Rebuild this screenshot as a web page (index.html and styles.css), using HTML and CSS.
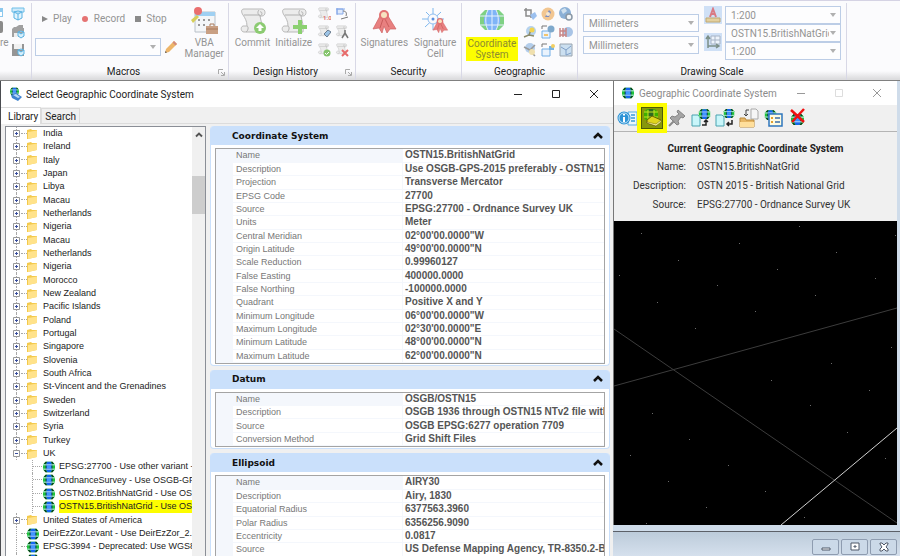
FILE: index.html
```html
<!DOCTYPE html>
<html lang="en">
<head>
    <meta charset="UTF-8">
    <meta name="viewport" content="width=device-width, initial-scale=1.0">
    <title>Select Geographic Coordinate System</title>
    <link rel="stylesheet" href="styles.css">
</head>
<body>
    <svg class="defs" aria-hidden="true">
        <symbol id="globe" viewBox="0 0 16 14">
            <path d="M4 1h8l3 3v6l-3 3H4l-3-3V4z" fill="#1fc23c"/>
            <path d="M4 1h2L4 3.500H2zM12 1h-2l2 2.500h2zM4 13h2l-2-2.500H2zM12 13h-2l2-2.500h2z" fill="#0b3d1c"/>
            <path d="M6 1h4l1.500 3v6L10 13H6l-1.500-3V4z" fill="#1565f0"/>
            <path d="M5.500 5.500h5v3h-5z" fill="#3f97ff"/>
            <path d="M4.500 3.500v7M11.500 3.500v7" stroke="#0c4a2a"/>
            <path d="M1 4.500h14M1 9.500h14" stroke="#d8f3ff"/>
        </symbol>
        <symbol id="folder" viewBox="0 0 12 12">
            <path d="M1 2l4-1 1 1h5l-.5 7L2 11H1z" fill="#f3c94b"/>
            <path d="M2 4l9-1.500V9L2 11z" fill="#ffe28a"/>
        </symbol>
        <symbol id="scroll" viewBox="0 0 28 28">
            <path d="M5 2h18c4 0 4 7 0 7h-2c1 6 3 9 2 16H5c-3 0-4-5-1-6h4c0-5-2-8-4-11S2 2 5 2z" fill="#ececec" stroke="#b9b9b9"/>
            <path d="M8 19c2 1 1 5-1 6M20 3c-2 2-1 5 1 6 3-1 2-5 0-4M5 8h16" fill="none" stroke="#b0b0b0"/>
        </symbol>
        <symbol id="ribbon-seal" viewBox="0 0 28 28">
            <path d="M10 9L3 22l6-1 3 5 2-7 3 7 3-4 6 0-8-13z" fill="#e88080" stroke="#cf6262" stroke-width=".7"/>
            <path d="M13 12l-3 9M15 12l4 8" stroke="#c95b5b"/>
            <circle cx="14" cy="8" r="5" fill="#e27373"/>
            <circle cx="14" cy="8" r="3" fill="#f7e3c0"/>
        </symbol>
        <symbol id="up" viewBox="0 0 10 8"><path d="M1 6l4-4 4 4" fill="none" stroke="currentColor" stroke-width="2.500"/></symbol>
    </svg>

    <header class="ribbon">
        <section class="group group-edge">
            <div class="group-body">
                <button class="cut" type="button">
                    <svg width="6" height="28" viewBox="0 0 6 28"><path d="M0 1h3v9H0z" fill="#8cc8ee"/><path d="M0 5h2v4H0z" fill="#fff"/><rect x="-4" y="14" width="7" height="12" rx="2" fill="#8b8b8b"/></svg>
                    re
                </button>
                <div class="small-icons one">
                    <svg viewBox="0 0 14 14"><path d="M1 1h12v4H1z" fill="#cfeafa" stroke="#6fbfe8"/><path d="M3 5l4-1 4 1v6l-4 2-4-2zM3 5l4 2 4-2M7 7v6" fill="#e3f4fd" stroke="#59b2e3"/></svg>
                    <svg viewBox="0 0 14 14"><path d="M1 4l2-2h2L8 0h4v3h1v9H1z" fill="#a0a0a0"/><path d="M3 8h4v4H3z" fill="#eee"/><path d="M7 7l3-1 3 1v4l-3 2-3-2zM7 7l3 2 3-2" fill="#d4effc" stroke="#59b2e3"/></svg>
                    <svg viewBox="0 0 14 14"><path d="M1 1h12v12H1z" fill="#959595"/><path d="M3 1h8v5H3z" fill="#f1f1f1"/><path d="M7 7l3-1 3 1v4l-3 2-3-2zM7 7l3 2 3-2" fill="#d4effc" stroke="#59b2e3"/></svg>
                </div>
            </div>
        </section>

        <section class="group group-macros">
            <div class="group-body">
                <div class="macro-tools">
                    <div class="macro-buttons">
                        <button type="button"><svg width="7" height="8" viewBox="0 0 7 8"><path d="M1 1l6 3-6 3z" fill="#8a8a8a"/></svg>Play</button>
                        <button type="button"><svg width="8" height="8" viewBox="0 0 8 8"><circle cx="4" cy="4" r="3" fill="#e57373"/></svg>Record</button>
                        <button type="button"><svg width="7" height="8" viewBox="0 0 7 8"><path d="M1 1h6v6H1z" fill="#8a8a8a"/></svg>Stop</button>
                    </div>
                    <div class="macro-pick">
                        <span class="combo"><select aria-label="Macro"><option></option></select></span>
                        <svg width="14" height="14" viewBox="0 0 14 14"><path d="M1 13l1-4 8-8 3 3-8 8z" fill="#edb56a"/><path d="M10 1l3 3-1.500 1.500-3-3z" fill="#d28a7c"/><path d="M1 13l.5-2 1.500 1.500z" fill="#555"/></svg>
                    </div>
                </div>
                <button class="big" type="button">
                    <svg width="28" height="28" viewBox="0 0 28 28"><path d="M5 5h20v20H5z" fill="#f4f6f8" stroke="#b8c0c8"/><path d="M5 5h20v4H5z" fill="#9fd0f2"/><path d="M8 13h2M13 13h2M18 13h2M8 18h2M13 18h2" stroke="#9a9a9a" stroke-width="2"/><circle cx="8" cy="4" r="4" fill="#ea6f6f"/><path d="M1 13l6-5 2 2-6 6z" fill="#d7cf5a"/><path d="M16 19h12v8H16z" fill="#c9a084"/><path d="M20 19v-2h4v2M16 22h12" fill="none" stroke="#a87b5c"/></svg>
                    VBA<br>Manager
                </button>
            </div>
            <h2>Macros</h2>
            <svg class="launcher" viewBox="0 0 7 7"><path d="M.5 5V.5H5M3 3l3 3M6.500 3v3.500H3" fill="none" stroke="#aaa"/></svg>
        </section>

        <section class="group group-history">
            <div class="group-body">
                <button class="big" type="button">
                    <svg width="28" height="28" viewBox="0 0 28 28"><use href="#scroll"/><circle cx="21" cy="21" r="6" fill="#8ccb72"/><path d="M21 17l4 4h-2.500v3h-3v-3H17z" fill="#fff"/></svg>
                    Commit
                </button>
                <button class="big" type="button">
                    <svg width="28" height="28" viewBox="0 0 28 28"><use href="#scroll"/><path d="M18 13h4v5h5v4h-5v5h-4v-5h-5v-4h5z" fill="#8bd070"/></svg>
                    Initialize
                </button>
                <div class="small-icons two">
                    <svg viewBox="0 0 14 14"><use href="#scroll" width="13" height="12"/><text x="6" y="13" font-size="6" font-weight="bold" fill="#dc7474">1.0</text></svg>
                    <svg viewBox="0 0 14 14"><path d="M2 2h6v5H2zM1 2h9M2 1v7" fill="#dfe9fb" stroke="#86a9e8"/><path d="M8 4c3 0 4 2 3 5M6 12l7-2" fill="none" stroke="#777"/></svg>
                    <svg viewBox="0 0 14 14"><use href="#scroll" width="13" height="12"/><path d="M7 9l4-4 3 2-4 5z" fill="#9cc3e6" stroke="#6a7c8e"/></svg>
                    <svg viewBox="0 0 14 14"><use href="#scroll" width="13" height="12"/><path d="M10 5v4M10 8l-3 5M10 8l3 5" stroke="#777" stroke-width="1.500"/></svg>
                    <svg viewBox="0 0 14 14"><use href="#scroll" width="13" height="12"/><circle cx="10" cy="10" r="3.500" fill="#84c46c"/><path d="M8 10l1.500 1.500L12 9" fill="none" stroke="#fff"/></svg>
                    <svg viewBox="0 0 14 14"><use href="#scroll" width="13" height="12"/><path d="M7 7l6 6M13 7l-6 6" stroke="#e76a6a" stroke-width="2"/></svg>
                </div>
            </div>
            <h2>Design History</h2>
            <svg class="launcher" viewBox="0 0 7 7"><path d="M.5 5V.5H5M3 3l3 3M6.500 3v3.500H3" fill="none" stroke="#aaa"/></svg>
        </section>

        <section class="group group-security">
            <div class="group-body">
                <button class="big" type="button">
                    <svg width="28" height="28"><use href="#ribbon-seal"/></svg>
                    Signatures
                </button>
                <button class="big" type="button">
                    <svg width="28" height="28" viewBox="0 0 28 28"><path d="M12 1v22M1 12h22M5 5l15 15M20 5L4 20" stroke="#7fb8ee"/><circle cx="12" cy="12" r="5" fill="#fafafc" stroke="#8fbdf0"/><circle cx="12" cy="12" r="1.500" fill="#5a8fe0"/><use href="#ribbon-seal" x="10" y="9" width="18" height="18"/></svg>
                    Signature<br>Cell
                </button>
            </div>
            <h2>Security</h2>
        </section>

        <section class="group group-geographic">
            <div class="group-body">
                <button class="big" type="button">
                    <svg width="28" height="28" viewBox="0 0 28 28"><path d="M7 3h14l5 5v10l-5 5H7l-5-5V8z" fill="#7fd184"/><path d="M10 3h8l4 8v5l-4 7h-8l-4-7v-5z" fill="#7fb4f7"/><path d="M2 9h24M2 18h24M10 3C7 8 7 18 10 23M18 3c3 5 3 15 0 20M14 3v20" fill="none" stroke="#e6f1fc"/></svg>
                    <mark>Coordinate<br>System</mark>
                </button>
                <div class="small-icons three">
                    <svg viewBox="0 0 14 14"><path d="M3 1v8h7M1 3h7v8" fill="none" stroke="#8a8a8a" stroke-width="1.500"/><path d="M7 8l5-3 2 4-4 4z" fill="#9cc0ef"/></svg>
                    <svg viewBox="0 0 14 14"><circle cx="7" cy="7" r="6.500" fill="#f2c691"/><path d="M4 10l4-7 2 2-2 5z" fill="#7d8dc0"/><circle cx="7" cy="7" r="2" fill="#f7e7ce"/></svg>
                    <svg viewBox="0 0 14 14"><circle cx="6" cy="6" r="6" fill="#8bb0d6"/><path d="M2 3l4-2 2 3-4 3z" fill="#cfe0ee"/><circle cx="10" cy="10" r="3" fill="#f3f6f8" stroke="#8a98a6" stroke-width="1.500"/></svg>
                    <svg viewBox="0 0 14 14"><circle cx="8" cy="6" r="5" fill="#b6d2ee"/><path d="M1 12l5-2 2-5 2 1M6 10l5 1" fill="none" stroke="#8a8a6a" stroke-width="1.500"/><circle cx="9" cy="5" r="2.500" fill="#f2d34e"/></svg>
                    <svg viewBox="0 0 14 14"><path d="M1 6h8v7H1z" fill="#eaf3fd" stroke="#73aee6"/><path d="M1 4V1h5" fill="none" stroke="#777"/><circle cx="10" cy="4" r="3.500" fill="#7fa9cc"/><path d="M3 9h4v2H3z" fill="#f2c56e"/></svg>
                    <svg viewBox="0 0 14 14"><circle cx="9" cy="7" r="5" fill="#a9c4e6"/><path d="M1 3v9M4 3v9M7 3v9M1 6h6M1 10h6" stroke="#c88686" stroke-width="1.500"/></svg>
                    <svg viewBox="0 0 14 14"><circle cx="7" cy="5" r="5" fill="#b3cdea"/><path d="M1 4l6 3 5-5M6 7l6 6" fill="none" stroke="#9a9a9a" stroke-width="1.500"/><circle cx="9" cy="9" r="3" fill="#f0e0ae"/></svg>
                    <svg viewBox="0 0 14 14"><path d="M1 6h8v7H1z" fill="#eaf3fd" stroke="#73aee6"/><path d="M1 4V1h5" fill="none" stroke="#777"/><path d="M8 3h5v4H8z" fill="#79b4e2"/><circle cx="12" cy="3" r="2" fill="#f2cf62"/></svg>
                    <svg viewBox="0 0 14 14"><path d="M1 1h12v12H1z" fill="#cbdff0" stroke="#9aa5b0"/><path d="M2 4l5 3 5-4M7 7v5l5-2" fill="none" stroke="#7f9fc8"/></svg>
                </div>
            </div>
            <h2>Geographic</h2>
        </section>

        <section class="group group-scale">
            <div class="group-body">
                <div class="units">
                    <span class="combo"><select aria-label="Master unit"><option>Millimeters</option></select></span>
                    <span class="combo"><select aria-label="Sub unit"><option>Millimeters</option></select></span>
                </div>
                <div class="toggles">
                    <button type="button" aria-label="Annotation scale"><svg width="16" height="16" viewBox="0 0 16 16"><path d="M5 10l3-8 3 8M6 7h4" fill="none" stroke="#d97a84" stroke-width="2"/><path d="M1 11h14v4H1z" fill="#e3d0a0" stroke="#c0a870"/></svg></button>
                    <button type="button" aria-label="Scale lock"><svg width="16" height="16" viewBox="0 0 16 16"><path d="M6 2h9v8H6zM10 2v8M6 6h9" fill="#edf3fb" stroke="#a7b4c6"/><path d="M3 14V3M1 5l2-3 2 3M3 12h10M11 10l3 2-3 2" fill="none" stroke="#7c8f88" stroke-width="1.500"/></svg></button>
                </div>
                <div class="scales">
                    <span class="combo"><select aria-label="Annotation scale"><option>1:200</option></select></span>
                    <span class="combo"><select aria-label="Coordinate system"><option>OSTN15.BritishNatGrid</option></select></span>
                    <span class="combo"><select aria-label="Drawing scale"><option>1:200</option></select></span>
                </div>
            </div>
            <h2>Drawing Scale</h2>
        </section>
    </header>

    <main class="workspace">
        <section class="dialog">
            <header class="titlebar">
                <svg width="13" height="14" viewBox="0 0 13 14"><use href="#globe" width="11" height="9"/><path d="M2 8l5-2 6 4-4 4-6-3z" fill="#3f83cf"/><path d="M4 8l3-1 4 3-2 1z" fill="#b7d8f6"/></svg>
                <h1>Select Geographic Coordinate System</h1>
                <div class="window-buttons">
                    <button type="button" aria-label="Minimize"><svg viewBox="0 0 10 10"><path d="M1 5.500h8"/></svg></button>
                    <button type="button" aria-label="Maximize"><svg viewBox="0 0 10 10"><path d="M1.500 1.500h7v7h-7z"/></svg></button>
                    <button type="button" aria-label="Close"><svg viewBox="0 0 10 10"><path d="M1 1l8 8M9 1L1 9"/></svg></button>
                </div>
            </header>
            <nav class="tabs">
                <button class="tab active" type="button">Library</button>
                <button class="tab" type="button">Search</button>
            </nav>
            <div class="dialog-body">
                <div class="tree-box">
                    <ul class="tree" id="tree"></ul>
                    <div class="scrollbar">
                        <button type="button" aria-label="Scroll up"><svg width="8" height="6"><use href="#up"/></svg></button>
                        <div class="thumb"></div>
                    </div>
                </div>
                <div class="panels">
                    <section class="panel">
                        <h2>Coordinate System <svg width="10" height="8"><use href="#up"/></svg></h2>
                        <div class="grid-box">
                            <table>
                                <tr><th>Name</th><td>OSTN15.BritishNatGrid</td></tr>
                                <tr><th>Description</th><td>Use OSGB-GPS-2015 preferably - OSTN15 National Grid</td></tr>
                                <tr><th>Projection</th><td>Transverse Mercator</td></tr>
                                <tr><th>EPSG Code</th><td>27700</td></tr>
                                <tr><th>Source</th><td>EPSG:27700 - Ordnance Survey UK</td></tr>
                                <tr><th>Units</th><td>Meter</td></tr>
                                <tr><th>Central Meridian</th><td>02°00'00.0000"W</td></tr>
                                <tr><th>Origin Latitude</th><td>49°00'00.0000"N</td></tr>
                                <tr><th>Scale Reduction</th><td>0.99960127</td></tr>
                                <tr><th>False Easting</th><td>400000.0000</td></tr>
                                <tr><th>False Northing</th><td>-100000.0000</td></tr>
                                <tr><th>Quadrant</th><td>Positive X and Y</td></tr>
                                <tr><th>Minimum Longitude</th><td>06°00'00.0000"W</td></tr>
                                <tr><th>Maximum Longitude</th><td>02°30'00.0000"E</td></tr>
                                <tr><th>Minimum Latitude</th><td>48°00'00.0000"N</td></tr>
                                <tr><th>Maximum Latitude</th><td>62°00'00.0000"N</td></tr>
                            </table>
                        </div>
                    </section>
                    <section class="panel">
                        <h2>Datum <svg width="10" height="8"><use href="#up"/></svg></h2>
                        <div class="grid-box">
                            <table>
                                <tr><th>Name</th><td>OSGB/OSTN15</td></tr>
                                <tr><th>Description</th><td>OSGB 1936 through OSTN15 NTv2 file with grid shift</td></tr>
                                <tr><th>Source</th><td>OSGB EPSG:6277 operation 7709</td></tr>
                                <tr><th>Conversion Method</th><td>Grid Shift Files</td></tr>
                            </table>
                        </div>
                    </section>
                    <section class="panel">
                        <h2>Ellipsoid <svg width="10" height="8"><use href="#up"/></svg></h2>
                        <div class="grid-box">
                            <table>
                                <tr><th>Name</th><td>AIRY30</td></tr>
                                <tr><th>Description</th><td>Airy, 1830</td></tr>
                                <tr><th>Equatorial Radius</th><td>6377563.3960</td></tr>
                                <tr><th>Polar Radius</th><td>6356256.9090</td></tr>
                                <tr><th>Eccentricity</th><td>0.0817</td></tr>
                                <tr><th>Source</th><td>US Defense Mapping Agency, TR-8350.2-B</td></tr>
                            </table>
                        </div>
                    </section>
                </div>
            </div>
        </section>

        <div class="side">
            <section class="gcs">
                <header class="titlebar inactive">
                    <svg width="14" height="12"><use href="#globe"/></svg>
                    <h1>Geographic Coordinate System</h1>
                    <div class="window-buttons">
                        <button type="button" aria-label="Minimize"><svg viewBox="0 0 10 10"><path d="M1 5.500h8"/></svg></button>
                        <button type="button" aria-label="Maximize" disabled><svg viewBox="0 0 10 10"><path d="M1.500 1.500h7v7h-7z"/></svg></button>
                        <button type="button" aria-label="Close"><svg viewBox="0 0 10 10"><path d="M1 1l8 8M9 1L1 9"/></svg></button>
                    </div>
                </header>
                <div class="toolbar">
                    <button type="button" aria-label="Details"><svg viewBox="0 0 20 20"><path d="M11 4h9v13h-9z" fill="#eaf6fd" stroke="#58aee0"/><path d="M14 7h4M14 10h4M14 13h4" stroke="#3b9bd8" stroke-width="1.500"/><circle cx="7" cy="10" r="6.500" fill="#2d93d6"/><circle cx="7" cy="10" r="5" fill="none" stroke="#c6e6f8"/><path d="M7 6v1.500M7 9v5" stroke="#fff" stroke-width="2"/></svg></button>
                    <button class="picked" type="button" aria-label="From library"><svg viewBox="0 0 20 20"><path d="M5 1h8l3 3v6l-3 3H5l-3-3V4z" fill="#3fae00"/><path d="M7 1h4l1 3v6H6V4z" fill="#2f6a20"/><path d="M2 4h14M2 9h14M6 2v9M12 2v9" stroke="#c7e420"/><path d="M5 12l5-4 9 4-5 6-9-3z" fill="#e0d51c" stroke="#6c6400"/><path d="M5 14l9 2 5-4v2l-5 4-9-3z" fill="#f7f29a" stroke="#6c6400" stroke-width=".5"/></svg></button>
                    <button type="button" aria-label="Pin"><svg viewBox="0 0 20 20"><path d="M11 2l7 6-2 2-2-1-3 4 1 3-2 1-7-7 2-2 3 1 4-3-2-2z" fill="#a5a5a5" stroke="#858585"/><path d="M7 13l-5 5" stroke="#8a8a8a" stroke-width="2"/></svg></button>
                    <button type="button" aria-label="From file"><svg viewBox="0 0 20 20"><path d="M1 7h6l2 2v9H1z" fill="#c9f6fa" stroke="#4aa3b0"/><use href="#globe" x="7" y="0" width="13" height="12"/><path d="M11 17h4v-4M13 14l2-2 2 2" fill="none" stroke="#222" stroke-width="1.500"/></svg></button>
                    <button type="button" aria-label="From reference"><svg viewBox="0 0 20 20"><path d="M1 7h6l2 2v9H1z" fill="#c9f6fa" stroke="#4aa3b0"/><use href="#globe" x="8" y="0" width="12" height="11"/><path d="M17 12v4h-5M14 14l-2 2 2 2" fill="none" stroke="#222" stroke-width="1.500"/></svg></button>
                    <button type="button" aria-label="Export"><svg viewBox="0 0 20 20"><path d="M12 1h5l2 2v8h-7z" fill="#f6f6f6" stroke="#aaa"/><path d="M10 2H7v6M5 6l2 2 2-2" fill="none" stroke="#444"/><path d="M1 10h5l1 2h8v7H1z" fill="#e8b765" stroke="#b98a3c"/><path d="M1 14h14v5H1z" fill="#ffdf9c"/></svg></button>
                    <button type="button" aria-label="Edit details"><svg viewBox="0 0 20 20"><use href="#globe" x="1" y="1" width="13" height="12"/><path d="M6 6h13v12H6z" fill="#fffbe0" stroke="#2e76bd" stroke-width="1.500"/><path d="M8 10h2M8 14h2" stroke="#e0a030" stroke-width="2"/><path d="M12 10h5M12 14h5" stroke="#3b6ea8" stroke-width="1.500"/></svg></button>
                    <button type="button" aria-label="Delete"><svg viewBox="0 0 20 20"><use href="#globe" x="3" y="5" width="15" height="13"/><path d="M4 2l13 12M17 1L5 14" stroke="#f01010" stroke-width="2.500"/></svg></button>
                </div>
                <div class="current">
                    <h2>Current Geographic Coordinate System</h2>
                    <dl>
                        <dt>Name:</dt><dd>OSTN15.BritishNatGrid</dd>
                        <dt>Description:</dt><dd>OSTN 2015 - British National Grid</dd>
                        <dt>Source:</dt><dd>EPSG:27700 - Ordnance Survey UK</dd>
                    </dl>
                </div>
                <svg class="view" id="view" viewBox="0 0 283 304" preserveAspectRatio="none">
                    <path d="M0 108L283 302M0 165L283 87" stroke="#3c3c3c"/>
                    <path d="M167 304L283 207" stroke="#d0d0d0"/>
                </svg>
            </section>
            <div class="view-bar">
                <button type="button" aria-label="Minimize view"><svg viewBox="0 0 12 10"><path d="M2 6h8v2H2z"/></svg></button>
                <button type="button" aria-label="Restore view"><svg viewBox="0 0 12 10"><path d="M2 1h8v7H2zM5 4h2v1H5z"/></svg></button>
                <button type="button" aria-label="Close view"><svg viewBox="0 0 12 10"><path d="M2 1h2l2 2 2-2h2v1L8 5l2 2v2H8L6 7 4 9H2V7l2-2-2-3z"/></svg></button>
            </div>
        </div>
    </main>

    <script>
        // kind: c = closed folder, o = open folder, s = system, k = system inside a folder
        const rows = [
            ['c', 'India'], ['c', 'Ireland'], ['c', 'Italy'], ['c', 'Japan'], ['c', 'Libya'],
            ['c', 'Macau'], ['c', 'Netherlands'], ['c', 'Nigeria'], ['c', 'Macau'],
            ['c', 'Netherlands'], ['c', 'Nigeria'], ['c', 'Morocco'], ['c', 'New Zealand'],
            ['c', 'Pacific Islands'], ['c', 'Poland'], ['c', 'Portugal'], ['c', 'Singapore'],
            ['c', 'Slovenia'], ['c', 'South Africa'], ['c', 'St-Vincent and the Grenadines'],
            ['c', 'Sweden'], ['c', 'Switzerland'], ['c', 'Syria'], ['c', 'Turkey'], ['o', 'UK'],
            ['k', 'EPSG:27700 - Use other variant - OSTN15'],
            ['k', 'OrdnanceSurvey - Use OSGB-GPS-2015'],
            ['k', 'OSTN02.BritishNatGrid - Use OSGB-GPS-2002'],
            ['k', 'OSTN15.BritishNatGrid - Use OSGB-GPS-2015', true],
            ['c', 'United States of America'],
            ['s', 'DeirEzZor.Levant - Use DeirEzZor_2.Levant'],
            ['s', 'EPSG:3994 - Deprecated: Use WGS84'],
            ['s', '']
        ];

        const tree = document.getElementById('tree');
        rows.forEach(([kind, name, selected]) => {
            const li = document.createElement('li');
            li.className = 'kind-' + kind + (selected ? ' selected' : '');
            const folder = kind === 'c' || kind === 'o';
            const box = '<svg class="expander" viewBox="0 0 9 9"><path d="M1.500 1.500h6v6h-6z" fill="#fff" stroke="#999"/><path d="M3 4.500h3' +
                (kind === 'c' ? 'M4.500 3v3' : '') + '" stroke="#3b4f9e"/></svg>';
            li.innerHTML = (folder ? box : '<span class="expander"></span>') +
                '<svg class="node-icon"><use href="#' + (folder ? 'folder' : 'globe') + '"/></svg>' +
                '<span class="node-name">' + name + '</span>';
            tree.appendChild(li);
        });

        // grid points of the view
        const points = [
            [27, 12], [185, 5], [281, 14], [125, 22], [222, 31], [64, 39], [163, 48], [261, 57],
            [5, 54], [103, 64], [201, 74], [43, 81], [141, 90], [81, 107], [277, 126], [217, 142],
            [157, 159], [255, 169], [196, 184], [38, 192], [233, 211], [75, 218], [16, 234],
            [271, 237], [114, 244], [54, 260], [151, 270], [92, 286], [190, 296], [32, 302]
        ];
        const view = document.getElementById('view');
        points.forEach(([x, y]) => {
            const dot = document.createElementNS('http://www.w3.org/2000/svg', 'rect');
            dot.setAttribute('x', x);
            dot.setAttribute('y', y);
            dot.setAttribute('width', 1);
            dot.setAttribute('height', 1);
            dot.setAttribute('fill', '#6a6a6a');
            view.appendChild(dot);
        });
    </script>
</body>
</html>
```

FILE: styles.css
```css
* {
    box-sizing: border-box;
}
body {
    margin: 0;
    height: 100vh;
    display: flex;
    flex-direction: column;
    overflow: hidden;
    font-family: Roboto, "Open Sans", sans-serif;
    font-size: 10px;
    color: #222;
}
h1, h2, ul, dl, dd {
    margin: 0;
    padding: 0;
}
button {
    border: 0;
    padding: 0;
    background: none;
    font: inherit;
    color: inherit;
}
svg {
    flex: none;
}
.defs {
    display: none;
}

/* ribbon */
.ribbon {
    display: flex;
    flex: none;
    height: 81px;
    padding-top: 2px;
    border-top: 1px solid #d5d3e4;
    border-bottom: 1px solid #808080;
    background: linear-gradient(#fbfbfd 70px, #dcdcde 78px);
    color: #949494;
}
.group {
    position: relative;
    display: flex;
    flex-direction: column;
    border-right: 1px solid #d8d8e6;
}
.group-edge {
    width: 32px;
}
.group-macros {
    width: 197px;
}
.group-history {
    width: 127px;
}
.group-security {
    width: 106px;
}
.group-geographic {
    width: 116px;
}
.group-scale {
    width: 269px;
}
.group-body {
    display: flex;
    flex: 1;
    align-items: flex-start;
    justify-content: center;
    gap: 5px;
    padding-top: 4px;
}
.group h2 {
    height: 16px;
    line-height: 16px;
    text-align: center;
    font-size: 10px;
    font-weight: normal;
    color: #222;
}
.group-macros h2, .group-history h2 {
    padding-right: 13px;
}
.launcher {
    position: absolute;
    right: 3px;
    bottom: 4px;
    width: 7px;
    height: 7px;
}
.big, .cut {
    line-height: 11px;
    white-space: nowrap;
}
.big svg, .cut svg {
    display: block;
    margin: 0 auto 2px;
}
.cut {
    width: 8px;
}
.cut svg {
    margin-left: 0;
}
.group-edge .group-body {
    justify-content: flex-start;
    gap: 3px;
}
.group-security .group-body {
    gap: 6px;
}
.big mark {
    display: block;
    padding: 1px 2px;
    background: #fdfd00;
    color: #8c8c30;
}
.small-icons {
    display: grid;
    gap: 4px;
}
.small-icons svg {
    width: 14px;
    height: 14px;
}
.two {
    grid-template-columns: 14px 14px;
}
.three {
    grid-template-columns: 14px 14px 14px;
}
.macro-tools {
    flex: 1;
    padding-left: 3px;
}
.macro-buttons {
    display: flex;
    gap: 9px;
    height: 31px;
    padding: 6px 0 0 6px;
    align-items: flex-start;
}
.macro-buttons button {
    display: flex;
    align-items: center;
    gap: 5px;
}
.macro-pick {
    display: flex;
    align-items: center;
    gap: 3px;
}
.macro-pick .combo {
    flex: 1;
}
.group-macros .group-body {
    padding-right: 4px;
    gap: 7px;
}
.combo {
    position: relative;
    display: block;
}
.combo::after {
    content: "";
    position: absolute;
    right: 5px;
    top: 7px;
    border: 3px solid transparent;
    border-top: 4px solid #b0b0b0;
    border-bottom: 0;
}
.combo select {
    appearance: none;
    display: block;
    width: 100%;
    height: 18px;
    padding: 0 11px 0 5px;
    border: 1px solid #bccde6;
    border-radius: 0;
    background: #fdfdfe;
    font: inherit;
    color: #949494;
    text-overflow: clip;
}
.group-scale .group-body {
    padding: 3px 5px 0;
    gap: 3px;
}
.units, .scales {
    flex: 1;
}
.units {
    display: grid;
    gap: 4px;
    padding: 8px 2px 0 0;
}
.toggles {
    display: grid;
    gap: 9px;
}
.toggles button {
    display: grid;
    place-items: center;
    width: 18px;
    height: 18px;
    background: #cfe0f6;
}

/* windows below the ribbon */
.workspace {
    flex: 1;
    min-height: 0;
    display: flex;
    padding-left: 1px;
    background: #4a4c50;
}
.dialog {
    flex: 1;
    min-width: 0;
    display: flex;
    flex-direction: column;
    background: #f0f0f0;
}
.titlebar {
    display: flex;
    flex: none;
    align-items: center;
    gap: 4px;
    height: 26px;
    padding: 0 0 0 8px;
    background: #fff;
}
.titlebar h1 {
    flex: 1;
    font-size: 10px;
    font-weight: normal;
    white-space: nowrap;
}
.window-buttons {
    display: flex;
}
.window-buttons button {
    width: 38px;
    height: 24px;
}
.window-buttons svg {
    display: block;
    width: 10px;
    height: 10px;
    margin: 0 auto;
    fill: none;
    stroke: #222;
}
.inactive {
    height: 24px;
    padding: 0 1px 0 7px;
    color: #8b8b8b;
}
.inactive .window-buttons svg {
    stroke: #999;
}
.inactive .window-buttons :disabled svg {
    stroke: #ddd;
}
.tabs {
    display: flex;
    flex: none;
    align-items: flex-end;
    height: 17px;
    border-bottom: 1px solid #dcdcdc;
}
.tab {
    height: 15px;
    padding: 0 3px;
    border: 1px solid #dcdcdc;
    border-bottom: 0;
    font-size: 10px;
    line-height: 13px;
}
.tab.active {
    height: 17px;
    margin-bottom: -1px;
    padding: 0 2px 0 7px;
    border-left: 0;
    background: #fff;
}
.dialog-body {
    flex: 1;
    min-height: 0;
    display: flex;
    gap: 4px;
    padding: 2px 3px 0 4px;
    font-family: "Liberation Sans", Arial, sans-serif;
    font-size: 9px;
}
.tree-box {
    display: flex;
    width: 201px;
    border: 1px solid #8a8e96;
    border-bottom: 0;
    background: #fff;
    overflow: hidden;
}
.tree {
    flex: 1;
    min-width: 0;
    list-style: none;
    padding: 0 0 0 6px;
    overflow: hidden;
}
.tree li {
    position: relative;
    display: flex;
    align-items: center;
    height: 13px;
    white-space: nowrap;
}
.tree li:nth-child(3n) {
    height: 14px;
}
/* connecting lines */
.tree li::before {
    content: "";
    position: absolute;
    left: 4px;
    top: 0;
    bottom: 0;
    border-left: 1px dotted #a8a8a8;
}
.tree li::after {
    content: "";
    position: absolute;
    left: 9px;
    top: 6px;
    width: 6px;
    border-top: 1px dotted #a8a8a8;
}
.tree .kind-k::before {
    left: 20px;
}
.tree .kind-k::after {
    left: 21px;
    width: 9px;
}
.tree .kind-k {
    padding-left: 16px;
}
.expander {
    position: relative;
    z-index: 1;
    flex: none;
    width: 9px;
    height: 9px;
}
.node-icon {
    width: 14px;
    height: 12px;
    margin: 0 3px 0 5px;
}
.kind-c .node-icon, .kind-o .node-icon {
    width: 12px;
    margin: 0 5px 0 5px;
}
.selected .node-name {
    background: #fdfd00;
}
.node-name {
    line-height: 13px;
}
.scrollbar {
    flex: none;
    width: 13px;
    background: #f0f0f0;
}
.scrollbar button {
    display: grid;
    place-items: center;
    width: 13px;
    height: 16px;
    margin-bottom: 33px;
    color: #555;
}
.thumb {
    height: 38px;
    background: #cdcdcd;
}
.panels {
    flex: 1;
    min-width: 0;
    display: flex;
    flex-direction: column;
    gap: 4px;
}
.panel {
    flex: none;
    padding: 0 4px 1px;
    border: 1px solid #cae0fb;
    border-top: 0;
    border-radius: 4px;
    background: #fff;
}
.panel h2 {
    display: flex;
    align-items: center;
    justify-content: space-between;
    height: 19px;
    margin: 0 -4px 3px;
    padding: 0 6px 0 21px;
    border-radius: 3px 3px 0 0;
    background: #cae0fb;
    font: bold 9px "DejaVu Sans", Verdana, sans-serif;
    color: #111;
}
.grid-box {
    border: 1px solid #a4a4a4;
    overflow: hidden;
}
table {
    width: 100%;
    table-layout: fixed;
    border-collapse: collapse;
    border-left: 17px solid #f4f7fc;
}
tr {
    height: 13px;
}
tr:nth-child(3n) {
    height: 14px;
}
th, td {
    padding: 0 3px;
    border-bottom: 1px solid #f4f7fc;
    line-height: 12px;
    text-align: left;
    white-space: nowrap;
    overflow: hidden;
}
th {
    width: 178px;
    border-right: 1px solid #f4f7fc;
    font-weight: normal;
    color: #777;
}
tr:first-child th {
    background: #f4f7fc;
}
td {
    padding: 0 0 0 2px;
    font-size: 10px;
    font-weight: bold;
    color: #555;
}

/* right side */
.side {
    display: flex;
    flex-direction: column;
    width: 287px;
    background: #cfdcea;
}
.gcs {
    flex: 1;
    min-height: 0;
    display: flex;
    flex-direction: column;
    margin: 0 3px 6px 0;
    border-left: 1px solid #777;
    background: #f0f0f0;
}
.toolbar {
    display: flex;
    flex: none;
    align-items: center;
    gap: 4px;
    height: 27px;
    padding-left: 3px;
    border-bottom: 1px solid #b4b4b4;
}
.toolbar svg {
    display: block;
    width: 20px;
    height: 20px;
}
.toolbar .picked {
    margin: 0 -4px;
    padding: 1px;
    border: 4px solid #fdfd00;
    background: #87980c;
    outline: 1px solid #4e5c08;
    outline-offset: -5px;
}
.current {
    flex: none;
    height: 89px;
    padding-top: 8px;
}
.current h2 {
    text-align: center;
    font-size: 10px;
    line-height: 17px;
}
.current dl {
    display: grid;
    grid-template-columns: 72px 1fr;
    column-gap: 11px;
    line-height: 19px;
    color: #333;
}
.current dt {
    text-align: right;
}
.view {
    display: block;
    flex: 1;
    min-height: 0;
    width: 100%;
    background: #000;
}
.view-bar {
    display: flex;
    flex: none;
    justify-content: flex-end;
    gap: 2px;
    height: 25px;
    padding: 7px 3px 1px;
    border-top: 1px solid #5c6068;
    background: linear-gradient(#bccbda, #d5e0ed);
}
.view-bar button {
    width: 27px;
    border: 1px solid #8e9cb0;
    border-radius: 2px;
    background: #cbd9e8;
}
.view-bar svg {
    display: block;
    width: 12px;
    height: 10px;
    margin: 0 auto;
    fill: #fff;
    stroke: #4e5868;
}
```
